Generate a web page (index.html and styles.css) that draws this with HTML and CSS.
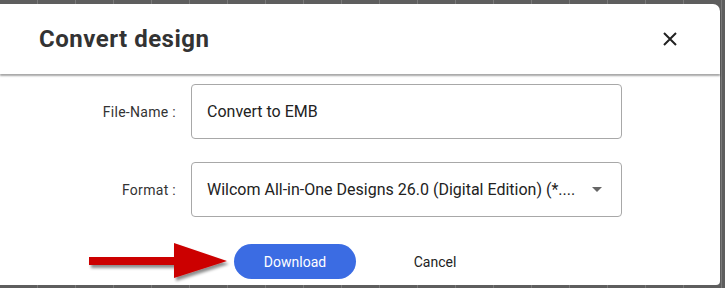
FILE: index.html
```html
<!DOCTYPE html>
<html lang="en">
<head>
    <meta charset="UTF-8">
    <meta name="viewport" content="width=device-width, initial-scale=1.0">
    <title>Convert design</title>
    <link rel="stylesheet" href="styles.css">
</head>
<body>
    <div class="dialog">
        <div class="dialog-header">
            <h1>Convert design</h1>
            <button class="close-btn" aria-label="Close">
                <svg width="14" height="14" viewBox="0 0 14 14">
                    <path d="M1 1 L13 13 M13 1 L1 13" stroke="#222" stroke-width="2" fill="none"/>
                </svg>
            </button>
        </div>
        <div class="dialog-body">
            <div class="form-row">
                <label for="fileName">File-Name :</label>
                <div class="field">
                    <input type="text" id="fileName" value="Convert to EMB">
                </div>
            </div>
            <div class="form-row">
                <label>Format :</label>
                <div class="field select">
                    <span class="select-value">Wilcom All-in-One Designs 26.0 (Digital Edition) (*....</span>
                    <span class="caret"></span>
                </div>
            </div>
            <div class="actions">
                <svg class="arrow" width="150" height="44" viewBox="0 0 150 44">
                    <defs>
                        <filter id="shade" x="-10%" y="-20%" width="130%" height="150%">
                            <feDropShadow dx="2" dy="3" stdDeviation="1.5" flood-color="#000" flood-opacity="0.45"/>
                        </filter>
                    </defs>
                    <path d="M3 15 L88 15 L88 1 L141 19 L88 36 L88 23 L3 23 Z" fill="#cc0000" filter="url(#shade)"/>
                </svg>
                <button class="btn btn-primary">Download</button>
                <button class="btn btn-link">Cancel</button>
            </div>
        </div>
    </div>
</body>
</html>
```

FILE: styles.css
```css
* {
    margin: 0;
    padding: 0;
    box-sizing: border-box;
    font-family: Roboto, "Liberation Sans", sans-serif;
}

body {
    width: 725px;
    height: 288px;
    overflow: hidden;
    background-color: #5e5e5e;
    background-image: repeating-linear-gradient(90deg, transparent 0, transparent 37px, #7a7a7a 37px, #7a7a7a 38px);
    padding: 4px 5px 3px 0;
}

.dialog {
    width: 720px;
    height: 281px;
    background: white;
    border-radius: 0 7px 4px 0;
    display: flex;
    flex-direction: column;
}

.dialog-header {
    height: 70px;
    display: flex;
    justify-content: space-between;
    align-items: center;
    padding: 0 40px 0 39px;
    border-radius: 0 7px 0 0;
    box-shadow: 0 2px 2px rgba(0,0,0,0.35);
    position: relative;
    z-index: 1;
}

.dialog-header h1 {
    font-size: 24px;
    font-weight: 700;
    color: #333;
    letter-spacing: 0.5px;
}

.close-btn {
    background: none;
    border: none;
    width: 16px;
    height: 16px;
    display: flex;
    align-items: center;
    justify-content: center;
    margin-right: 2px;
}

.dialog-body {
    padding-top: 10px;
    display: flex;
    flex-direction: column;
    gap: 23px;
}

.form-row {
    display: grid;
    grid-template-columns: 177px 431px;
    column-gap: 14px;
    align-items: center;
}

.form-row label {
    text-align: right;
    font-size: 14px;
    letter-spacing: 0.3px;
    color: #333;
    padding-right: 1px;
}

.field {
    height: 55px;
    border: 1px solid #a8a8a8;
    border-radius: 4px;
    display: flex;
    align-items: center;
    padding: 0 15px;
}

.field input {
    border: none;
    outline: none;
    width: 100%;
    font-size: 16px;
    color: #222;
    background: none;
}

.select {
    justify-content: space-between;
}

.select-value {
    font-size: 16px;
    color: #222;
    white-space: nowrap;
}

.caret {
    width: 0;
    height: 0;
    border-left: 5px solid transparent;
    border-right: 5px solid transparent;
    border-top: 5px solid #666;
    margin-right: 4px;
}

.actions {
    display: flex;
    align-items: center;
    gap: 18px;
    padding-left: 234px;
    margin-top: 4px;
    position: relative;
}

.arrow {
    position: absolute;
    left: 86px;
    top: -2px;
}

.btn {
    width: 122px;
    height: 35px;
    border: none;
    border-radius: 18px;
    font-size: 14px;
    cursor: pointer;
}

.btn-primary {
    background: #3b6ce3;
    color: white;
}

.btn-link {
    background: none;
    color: #222;
}
```
